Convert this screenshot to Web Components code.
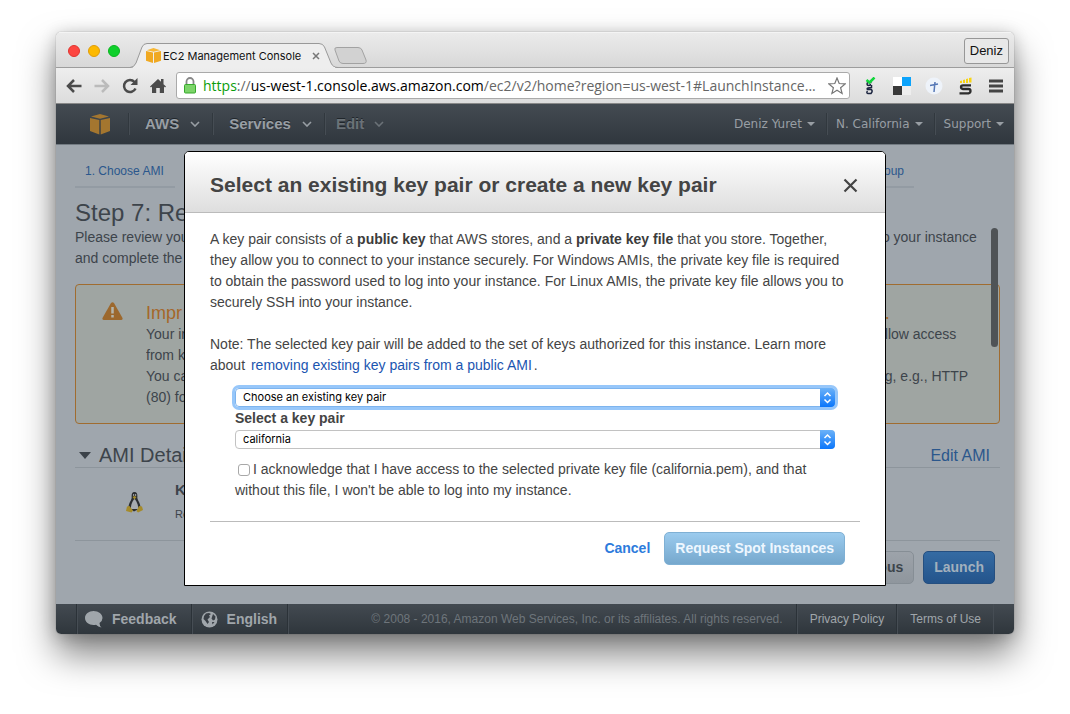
<!DOCTYPE html>
<html lang="en">
<head>
<meta charset="utf-8">
<title>EC2 Management Console</title>
<style>
body { margin: 0; padding: 32px 56px 80px; background: #fff; font: 14px/21px "Liberation Sans", Arial, sans-serif; color: #444; }
</style>
</head>
<body>
<browser-window>
  <browser-tabs slot="chrome"></browser-tabs>
  <browser-toolbar slot="chrome"></browser-toolbar>
  <console-nav></console-nav>
  <launch-review><key-pair-dialog></key-pair-dialog></launch-review>
  <console-footer></console-footer>
</browser-window>

<script>
const base = `<style>
*{box-sizing:border-box}
:host{display:block;box-sizing:border-box}
a{color:inherit;text-decoration:none}
button{font:inherit;color:inherit;margin:0;padding:0;border:0;background:none;display:flex;align-items:center}
svg{display:block;flex:none}
h1,h2,p{margin:0}
</style>`;
const define = (name, html) => customElements.define(name, class extends HTMLElement {
  constructor() {
    super();
    this.attachShadow({ mode: "open" }).innerHTML = base + html;
  }
});

define("browser-window", `<style>
:host{border-radius:5px;box-shadow:0 0 1px rgba(0,0,0,.5),0 20px 36px rgba(0,0,0,.5),0 2px 16px rgba(0,0,0,.2)}
main{border-radius:5px;overflow:hidden}
</style><main><slot name="chrome"></slot><slot></slot></main>`);

define("browser-tabs", `<style>
:host{height:36px;background:linear-gradient(#ebebeb,#d8d8d8);border-top:1px solid #f4f4f4;border-bottom:1px solid #9d9d9d;font:11px/16px Inter,sans-serif;color:#111}
.row{display:flex;align-items:flex-end;height:34px}
.lights{display:flex;gap:8px;padding:0 10px 10px 12px;align-items:center}
.lights button{width:12px;height:12px;border-radius:50%;background:#fd4641;border:1px solid #e0342f}
.lights button+button{background:#fdb900;border-color:#e09c08}
.lights button+button+button{background:#0fd02c;border-color:#0ab51f}
.tab{display:grid;width:208px;height:25px;margin-bottom:-1px}
.tab>*{grid-area:1/1}
.label{display:flex;align-items:center;padding:0 18px 0 16px;gap:2px;white-space:nowrap}
.label span{flex:1}
.new{margin:0 0 3px -4px}
.user{margin:0 5px 3px auto;height:26px;padding:0 5px;border:1px solid #979797;border-radius:3px;background:#e8e8e8;font:13px/16px "Liberation Sans",sans-serif}
</style>
<div class="row">
<div class="lights"><button aria-label="Close window"></button><button aria-label="Minimize"></button><button aria-label="Zoom"></button></div>
<div class="tab"><svg width="208" height="25" viewBox="0 0 208 25"><path d="M0 25V24.500Q4 24.500 6 20L12 4Q13.500 .5 17 .5H189Q193 .5 194.500 4L201 20Q203 24.500 208 24.500V25Z" fill="#eee" stroke="#999"/><path d="M3 25H205" stroke="#eee" stroke-width="2"/></svg>
<div class="label"><svg width="15" height="15" viewBox="0 0 20 20" fill="#f0a922"><path d="M0 4 9.300 6V20L0 17ZM20 4 10.700 6V20L20 17Z"/><path d="M1 3 10 0 19 3 10 5Z" fill="#f7b735"/></svg><span>EC2 Management Console</span><button aria-label="Close tab"><svg width="8" height="8" viewBox="0 0 8 8"><path d="M1 1 7 7M7 1 1 7" stroke="#777" stroke-width="1.500"/></svg></button></div></div>
<button class="new" aria-label="New tab"><svg width="33" height="17" viewBox="0 0 33 17"><path d="M3 .5H24Q27 .5 28 3L32 13Q33 16.500 29 16.500H9Q6 16.500 5 14L1 3Q0 .5 3 .5Z" fill="#d2d2d2" stroke="#a2a2a2"/></svg></button>
<button class="user">Deniz</button>
</div>`);

define("browser-toolbar", `<style>
:host{height:36px;background:linear-gradient(#eee,#dcdcdc);border-bottom:1px solid #888;color:#4d4d4d}
.row{display:flex;align-items:center;height:35px;padding:0 11px 0 10px}
.nav{display:flex;gap:12px;width:110px}
.url{flex:1;min-width:0;height:27px;display:flex;align-items:center;gap:7px;padding:0 3px 0 7px;background:#fff;border:1px solid #aaa;border-radius:3px;font:14px/20px "Open Sans",sans-serif;color:#666}
.url a{flex:1;white-space:nowrap}
.url i{font-style:normal;color:#0a9d0a}.url b{font-weight:400;color:#000}
.ext{display:flex;align-items:center;gap:14px;padding-left:12px}
</style>
<div class="row">
<div class="nav">
<button aria-label="Back"><svg width="16" height="16" viewBox="0 0 16 16" fill="none" stroke="#4b4b4b" stroke-width="2.500"><path d="M15.500 8H2M8 2 2 8l6 6"/></svg></button>
<button aria-label="Forward"><svg width="16" height="16" viewBox="0 0 16 16" fill="none" stroke="#bbb" stroke-width="2.500"><path d="M.5 8H14M8 2l6 6-6 6"/></svg></button>
<button aria-label="Reload"><svg width="16" height="16" viewBox="0 0 16 16"><path d="M13.500 10.500A6 6 0 1 1 12.500 4" fill="none" stroke="#4b4b4b" stroke-width="2.500"/><path d="M15.500 0V7H8.500Z" fill="#4b4b4b"/></svg></button>
<button aria-label="Home"><svg width="16" height="16" viewBox="0 0 16 16" fill="#4b4b4b"><path d="M0 8.500 8 1l3 2.800V1h2.500v5.200L16 8.500l-1 1-1-1V15H9.800v-5H6.200v5H2V8.500l-1 1Z"/></svg></button>
</div>
<div class="url"><svg width="12" height="17" viewBox="0 0 12 17"><path d="M2.500 8V4.500a3.500 3.500 0 0 1 7 0V8" fill="none" stroke="#888" stroke-width="1.800"/><rect x=".5" y="7.500" width="11" height="8.500" rx="1" fill="#7cd469" stroke="#36a92c"/></svg>
<a href="#"><i>https</i>://<b>us-west-1.console.aws.amazon.com</b>/ec2/v2/home?region=us-west-1#LaunchInstance...</a>
<button aria-label="Bookmark"><svg width="18" height="18" viewBox="0 0 18 18"><path d="M9 1l2.200 5.500 6 .4-4.600 3.800 1.500 5.800L9 13.300l-5.100 3.200 1.500-5.800L.8 6.900l6-.4Z" fill="none" stroke="#777" stroke-width="1.200"/></svg></button></div>
<div class="ext">
<svg width="17" height="18" viewBox="0 0 17 18" fill="none"><path d="M9.500 5.500H6.500Q5 5.500 5 7t1.800 1.500Q8.500 8.500 8.500 7M9.500 8v2.500L6 11q-1.500.5-.5 1.500H9q1.500.5 1 2.500l-1 1.500H6Q4 16 5.500 14" stroke="#1c2540" stroke-width="1.500"/><path d="M4.500 3l3 2.500 5-5" stroke="#12d63c" stroke-width="2.500"/></svg>
<svg width="18" height="18" viewBox="0 0 18 18"><path d="M0 0H9V9H0Z" fill="#fff"/><path d="M9 0H18V9H9Z" fill="#0ca3fb"/><path d="M0 9H9V18H0Z" fill="#383838"/><path d="M9 9H18V18H9Z" fill="#eee"/></svg>
<svg width="18" height="18" viewBox="0 0 18 18"><circle cx="9" cy="9" r="8.500" fill="#eef3fa"/><path d="M5 8.500 13 7M10 5q-.5 5-1 10" stroke="#5577b5" stroke-width="1.500" fill="none"/></svg>
<svg width="18" height="18" viewBox="0 0 18 18"><path d="M14 8.300H6Q4 8.300 4 10T6 12H11.500Q13.500 12 13.500 14T11.500 16.300H2.500" fill="none" stroke="#2d2d2d" stroke-width="2.300"/><path d="M3 6V4L5 3.500V6ZM6 6V3L8 2.500V6ZM9 6V2L11 1.500V6ZM12 5.500V1L14.500 .5V5.500Z" fill="#f8d412"/></svg>
<button aria-label="Menu"><svg width="14" height="14" viewBox="0 0 14 14"><path d="M0 2H14M0 7H14M0 12H14" stroke="#444" stroke-width="3"/></svg></button>
</div></div>`);

define("console-nav", `<style>
:host{height:41px;background:linear-gradient(#444b52,#30373e);border-bottom:1px solid #737b82;color:#989ea4}
nav{display:flex;align-items:center;height:40px;padding-right:10px}
button{height:22px;border-left:1px solid #31383e;box-shadow:inset 1px 0 #464d54}
.menu{font:bold 15px/22px "Liberation Sans",sans-serif;padding:0 12px 0 16px;gap:11px;text-shadow:0 -1px #20262b}
.edit{color:#6b7278;padding:0 0 0 11px;gap:10px}
.logo{padding:0 18px 0 34px}
.acct{font:12px/20px "DejaVu Sans",sans-serif;padding:0 11px 0 9px;gap:5px}
.first{margin-left:auto;border:0;box-shadow:none}
.last{padding-right:0}
</style><nav>
<a class="logo" href="#" aria-label="AWS home"><svg width="20" height="22" viewBox="0 0 20 22" fill="#a4762f"><path d="M0 5 9.300 7V21.500L0 18ZM20 5 10.700 7V21.500L20 18Z"/><path d="M1 3.500 10 1 19 3.500 10 5.700Z"/></svg></a>
<button class="menu">AWS<svg width="10" height="6" viewBox="0 0 10 6"><path d="M1 1l4 4 4-4" fill="none" stroke="currentColor" stroke-width="1.600"/></svg></button>
<button class="menu">Services<svg width="10" height="6" viewBox="0 0 10 6"><path d="M1 1l4 4 4-4" fill="none" stroke="currentColor" stroke-width="1.600"/></svg></button>
<button class="menu edit">Edit<svg width="10" height="6" viewBox="0 0 10 6"><path d="M1 1l4 4 4-4" fill="none" stroke="currentColor" stroke-width="1.600"/></svg></button>
<button class="acct first">Deniz Yuret<svg width="8" height="4" viewBox="0 0 8 4"><path d="M0 0H8L4 4Z" fill="currentColor"/></svg></button>
<button class="acct">N. California<svg width="8" height="4" viewBox="0 0 8 4"><path d="M0 0H8L4 4Z" fill="currentColor"/></svg></button>
<button class="acct last">Support<svg width="8" height="4" viewBox="0 0 8 4"><path d="M0 0H8L4 4Z" fill="currentColor"/></svg></button>
</nav>`);

define("launch-review", `<style>
:host{position:relative;background:#9fa6ad;color:#3d444b;padding:16px 14px 20px 19px;overflow:hidden}
.split{display:grid;grid-template-columns:minmax(0,1fr) 122px;white-space:nowrap}
.split>:first-child{overflow:hidden}
.steps{display:flex;justify-content:space-between;padding-right:86px;font-size:12px;line-height:21px;color:#2b578c}
.steps a{width:100px;padding:0 10px 4px;border-bottom:2px solid #939ba3}
.steps a+a{text-align:right}
h1{font-size:24px;line-height:28px;font-weight:400;margin-top:11px}
.alert{margin-top:15px;border:1px solid #a06c30;border-radius:4px;background:#9fa5a2;padding:17px 0 15px 26px;display:flex;gap:23px}
.alert .split{flex:1}
.big{font-size:18px;line-height:22px;color:#a5672a}
.head{display:flex;align-items:center;gap:8px;padding:0 10px 0 4px;height:24px;margin-top:20px;border-bottom:1px solid #8d959c;font-size:20px}
.head h2{font:inherit;flex:1}
.head a{font-size:16px;color:#2b578c}
.ami{display:flex;align-items:center;gap:32px;padding:9px 0 13px 51px;border-bottom:1px solid #8d959c;height:73px}
.ami b{font-size:15px;line-height:24px;display:block}
.ami small{font-size:11px;line-height:24px;display:block}
.actions{display:flex;justify-content:flex-end;gap:9px;padding:10px 5px 0 0;font-weight:bold}
.actions button{height:33px;padding:0 10px;border:1px solid #868e95;border-radius:5px;background:linear-gradient(#9da3aa,#8f969d)}
.actions .go{color:#a2b0bd;background:linear-gradient(#356ba3,#24548b);border-color:#254f80}
.thumb{position:absolute;right:16px;top:83px;width:7px;height:119px;border-radius:4px;background:#4f5356}
</style>
<div class="steps"><a href="#">1. Choose AMI</a><a href="#">oup</a></div>
<h1>Step 7: Re</h1>
<div class="split"><p>Please review you<br>and complete the</p><p>to your instance</p></div>
<div class="alert"><svg width="21" height="18" viewBox="0 0 21 18"><path d="M9 1Q10.500-.5 12 1L20.500 16Q21 18 19 18H2Q0 18 .5 16Z" fill="#9c682d"/><path d="M10.500 5V11.500M10.500 13V15.500" stroke="#b4b5ac" stroke-width="2.500"/></svg>
<div class="split"><div><p class="big">Impr</p><p>Your in<br>from k<br>You ca<br>(80) fo</p></div><div><p class="big">y.</p><p>allow access<br><br>ng, e.g., HTTP</p></div></div></div>
<div class="head"><svg width="12" height="7" viewBox="0 0 12 7"><path d="M0 0H12L6 7Z" fill="#3b4249"/></svg><h2>AMI Detail</h2><a href="#">Edit AMI</a></div>
<div class="ami"><svg width="17" height="21" viewBox="0 0 17 21"><path d="M8.500 0C5.500 0 5.500 3 5.700 6 5 9 2.500 11 2.500 16L8 19.500 14.500 16C14.500 11 12 9 11.300 6 11.500 3 11.500 0 8.500 0Z" fill="#2b2e31"/><path d="M8.500 7C7 8 4.500 13 5 17h7.200C12.500 13 10 8 8.500 7Z" fill="#a6abb0"/><path d="M6.500 5 8.500 4 10.500 5 8.500 7.500ZM1 14.500 3.500 14 7 18.500 5.500 20.500 0 19ZM16 14.500 13 14 10.500 19 12 20.500 17 18Z" fill="#a58b2b"/><path d="M7 3h1.200M9 3h1.200" stroke="#bbb" stroke-width="1.300"/></svg><div><b>K</b><small>Re</small></div></div>
<div class="actions"><button>Previous</button><button class="go">Launch</button></div>
<span class="thumb"></span>
<slot></slot>`);

define("key-pair-dialog", `<style>
:host{position:absolute;top:6px;left:128px;right:128px;background:#fff;border:1px solid #000;border-radius:5px 5px 0 0;color:#444;padding-bottom:20px}
header{display:flex;justify-content:space-between;align-items:center;height:61px;padding:6px 27px 0 25px;border-bottom:1px solid #bbb;border-radius:4px 4px 0 0;background:linear-gradient(#fff,#dedede)}
h1{font-size:21px;line-height:24px}
.body{padding:16px 25px 0}
p{padding-right:10px}
p+p{margin-top:21px}
p a{color:#1b55b0;padding:0 2px}
b{color:#3c3c3c}
form{margin:12px 25px 20px}
.pick{display:grid;height:19px}
.pick>*{grid-area:1/1}
select{appearance:none;width:100%;height:19px;margin:0;padding:0 24px 0 7px;border:1px solid #c2c2c2;border-radius:4px;background:#fff;color:#000;font:11px/17px Inter,sans-serif;outline:0}
.pick svg{justify-self:end;pointer-events:none}
.focus{border-radius:4px;box-shadow:0 0 0 3px #97c7fa}
.focus select{border-color:#7db4ee}
.name{display:block;font-weight:bold;line-height:23px}
.ack{display:block;margin-top:10px}
input{appearance:none;width:12px;height:12px;border:1px solid #a8a8a8;border-radius:3px;background:#fff;margin:0 3px;vertical-align:-2px}
.actions{border-top:1px solid #bbb;padding:10px 15px 0 0;display:flex;justify-content:flex-end;align-items:center;gap:14px;font-weight:bold}
.actions a{color:#2d7bdc}
.actions button{height:33px;padding:0 10px;border:1px solid #7fb0d4;border-radius:5px;background:linear-gradient(#9bcbee,#76a8cd);color:#eef7ff}
</style>
<header><h1>Select an existing key pair or create a new key pair</h1><button aria-label="Close"><svg width="15" height="15" viewBox="0 0 15 15"><path d="M1.500 1.500l12 12M13.500 1.500l-12 12" stroke="#444" stroke-width="2.200"/></svg></button></header>
<div class="body">
<p>A key pair consists of a <b>public key</b> that AWS stores, and a <b>private key file</b> that you store. Together, they allow you to connect to your instance securely. For Windows AMIs, the private key file is required to obtain the password used to log into your instance. For Linux AMIs, the private key file allows you to securely SSH into your instance.</p>
<p>Note: The selected key pair will be added to the set of keys authorized for this instance. Learn more about <a href="#">removing existing key pairs from a public AMI</a>.</p>
<form>
<div class="pick focus"><select aria-label="Key pair option"><option>Choose an existing key pair</option></select><svg width="15" height="19" viewBox="0 0 15 19"><defs><linearGradient id="g" x2="0" y2="1"><stop stop-color="#6cb2f8"/><stop offset="1" stop-color="#0a76fb"/></linearGradient></defs><path d="M0 0H11Q15 0 15 4V15Q15 19 11 19H0Z" fill="url(#g)"/><path d="M4.500 8l3-3 3 3M4.500 11.500l3 3 3-3" stroke="#fff" stroke-width="1.500" fill="none"/></svg></div>
<label class="name" for="pair">Select a key pair</label>
<div class="pick"><select id="pair"><option>california</option></select><svg width="15" height="19" viewBox="0 0 15 19"><path d="M0 0H11Q15 0 15 4V15Q15 19 11 19H0Z" fill="url(#g)"/><path d="M4.500 8l3-3 3 3M4.500 11.500l3 3 3-3" stroke="#fff" stroke-width="1.500" fill="none"/></svg></div>
<label class="ack"><input type="checkbox">I acknowledge that I have access to the selected private key file (california.pem), and that without this file, I won't be able to log into my instance.</label>
</form>
<div class="actions"><a href="#">Cancel</a><button>Request Spot Instances</button></div>
</div>`);

define("console-footer", `<style>
:host{height:30px;background:linear-gradient(#434a51,#2f363c);color:#a0a6ab}
footer{display:flex;height:30px;padding:0 20px}
footer>*{display:flex;align-items:center;border-left:1px solid #2b3238;box-shadow:inset 1px 0 #464d54}
.big{font-weight:bold;gap:9px;padding:0 14px 0 8px}
.lang{padding:0 10px 0 9px}
p{flex:1;justify-content:flex-end;font-size:12px;color:#6e757b;padding-right:13px}
.small{font-size:12px;padding:0 12px 0 13px}
.small:last-child{border-right:1px solid #464d54}
</style><footer>
<a class="big" href="#"><svg width="18" height="17" viewBox="0 0 18 17"><path d="M8.500 0C3.800 0 0 3 0 7s3.800 7 8.500 7q1.500 0 2.500-.3Q13 16 16.500 16.500 14.500 15 14.500 12 17.500 10 17.500 7C17.500 3 13.500 0 8.500 0Z" fill="currentColor"/></svg>Feedback</a>
<a class="big lang" href="#"><svg width="17" height="17" viewBox="0 0 17 17"><circle cx="8.500" cy="8.500" r="8" fill="#a0a6ab"/><path d="M5 2.500 8 2 10 3 8 4.500 9 6 6.500 8.500 8 11 6.500 13 4.500 10 2.500 8 3 5ZM12 3l2.500 2.500L14 8.500l-2 1L10.500 7.500ZM11 11l2.500 0-2 2.500Z" fill="#393f46"/></svg>English</a>
<p>© 2008 - 2016, Amazon Web Services, Inc. or its affiliates. All rights reserved.</p>
<a class="small" href="#">Privacy Policy</a><a class="small" href="#">Terms of Use</a>
</footer>`);
</script>
</body>
</html>
